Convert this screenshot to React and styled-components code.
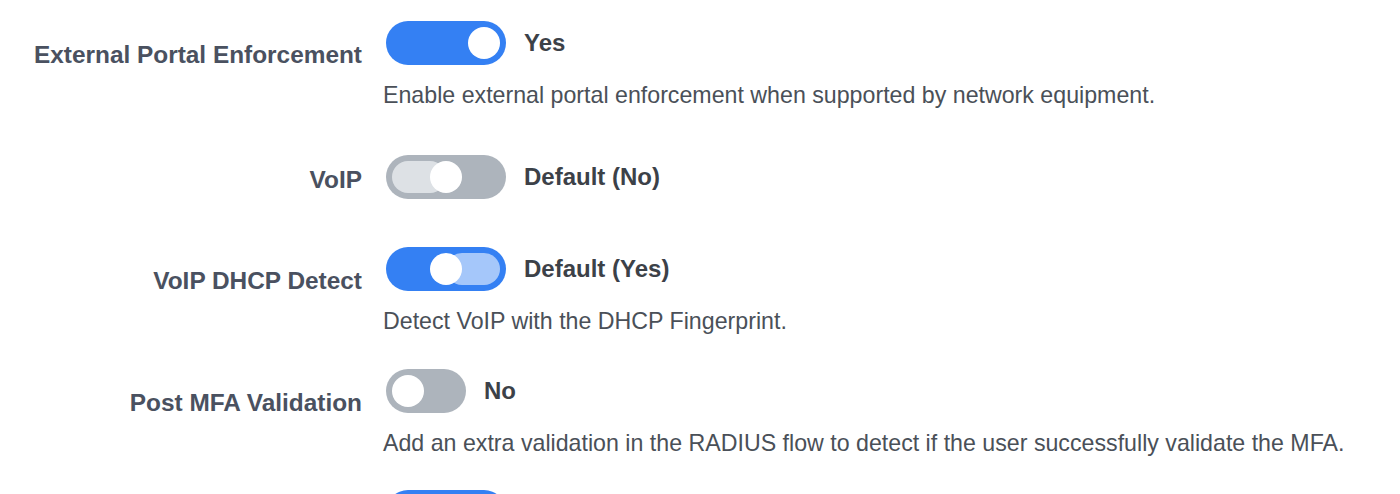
import React from "react";
import styled, { createGlobalStyle } from "styled-components";

const GlobalStyle = createGlobalStyle`
  html, body {
    margin: 0;
    padding: 0;
    background: #ffffff;
    height: 494px;
    overflow: hidden;
  }
  body {
    font-family: "Liberation Sans", Arial, Helvetica, sans-serif;
    color: #495057;
  }
`;

const Form = styled.div`
  display: flex;
  flex-direction: column;
  padding-top: 21px;
`;

const Row = styled.div`
  display: grid;
  grid-template-columns: 362px 1fr;
  column-gap: 21px;
  margin-bottom: ${(p) => p.$space}px;
`;

const Label = styled.div`
  text-align: right;
  font-size: 24.4px;
  font-weight: 700;
  line-height: 28px;
  color: #4a5160;
  padding-top: ${(p) => p.$offset}px;
`;

const Content = styled.div`
  display: flex;
  flex-direction: column;
  padding-left: 3px;
`;

const Control = styled.div`
  display: flex;
  align-items: center;
  gap: 18px;
`;

const Value = styled.span`
  font-size: 24px;
  font-weight: 700;
  color: #3c4148;
`;

const Help = styled.div`
  margin-top: 13px;
  margin-left: -3px;
  font-size: 23.2px;
  line-height: 34px;
  color: #4a5058;
`;

const Track = styled.div`
  position: relative;
  flex: none;
  width: ${(p) => p.$width}px;
  height: 44px;
  border-radius: 22px;
  background: ${(p) => (p.$on ? "#3480f3" : "#adb4bc")};
`;

const Fill = styled.div`
  position: absolute;
  top: 6px;
  height: 32px;
  border-radius: 16px;
  left: ${(p) => (p.$side === "left" ? "6px" : "50%")};
  right: ${(p) => (p.$side === "left" ? "50%" : "6px")};
  background: ${(p) => (p.$side === "left" ? "#dde1e5" : "#a5c7fa")};
`;

const Knob = styled.div`
  position: absolute;
  top: 6px;
  width: 32px;
  height: 32px;
  border-radius: 50%;
  background: #ffffff;
  left: ${(p) =>
    p.$pos === "center" ? "calc(50% - 16px)" : p.$pos === "right" ? "calc(100% - 38px)" : "6px"};
`;

// state: on | off | default-yes | default-no
function Switch({ state, width = 120 }) {
  const on = state === "on" || state === "default-yes";
  const pos = state === "on" ? "right" : state === "off" ? "left" : "center";
  return (
    <Track $width={width} $on={on}>
      {state === "default-no" && <Fill $side="left" />}
      {state === "default-yes" && <Fill $side="right" />}
      <Knob $pos={pos} />
    </Track>
  );
}

const fields = [
  {
    label: "External Portal Enforcement",
    state: "on",
    value: "Yes",
    help: "Enable external portal enforcement when supported by network equipment.",
    space: 43,
  },
  { label: "VoIP", state: "default-no", value: "Default (No)", space: 48 },
  {
    label: "VoIP DHCP Detect",
    state: "default-yes",
    value: "Default (Yes)",
    help: "Detect VoIP with the DHCP Fingerprint.",
    space: 31,
  },
  {
    label: "Post MFA Validation",
    state: "off",
    width: 80,
    value: "No",
    help: "Add an extra validation in the RADIUS flow to detect if the user successfully validate the MFA.",
    space: 30,
  },
  // next field, only its switch top shows at the bottom edge
  { label: "", state: "on", space: 0 },
];

export default function App() {
  return (
    <>
      <GlobalStyle />
      <Form>
        {fields.map((f, i) => (
          <Row key={i} $space={f.space}>
            <Label $offset={f.help ? 20 : 11}>{f.label}</Label>
            <Content>
              <Control>
                <Switch state={f.state} width={f.width} />
                {f.value && <Value>{f.value}</Value>}
              </Control>
              {f.help && <Help>{f.help}</Help>}
            </Content>
          </Row>
        ))}
      </Form>
    </>
  );
}
